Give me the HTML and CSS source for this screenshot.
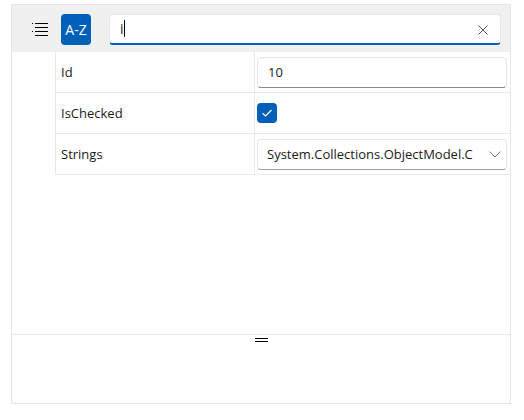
FILE: index.html
```html
<!DOCTYPE html>
<html>
<head>
<meta charset="utf-8">
<link rel="stylesheet" href="styles.css">
</head>
<body>
<div class="window">
  <div class="header">
    <div class="list-btn">
      <svg width="17" height="13" viewBox="0 0 17 13">
        <g fill="#000">
          <rect x="0" y="0" width="1" height="1"/>
          <rect x="3" y="0" width="13" height="1"/>
          <rect x="3" y="4" width="13" height="1"/>
          <rect x="0" y="8" width="1" height="1"/>
          <rect x="3" y="8" width="13" height="1"/>
          <rect x="3" y="12" width="13" height="1"/>
        </g>
      </svg>
    </div>
    <div class="az-btn">A-Z</div>
    <div class="search">
      <span class="search-text">i</span><span class="caret"></span>
      <svg class="clear" width="10" height="10" viewBox="0 0 10 10">
        <path d="M0.5 0.5L9.5 9.5M9.5 0.5L0.5 9.5" stroke="#555" stroke-width="1"/>
      </svg>
    </div>
  </div>
  <div class="grid-area">
    <div class="grid">
      <div class="row">
        <div class="name">Id</div>
        <div class="value"><div class="textbox">10</div></div>
      </div>
      <div class="row">
        <div class="name">IsChecked</div>
        <div class="value">
          <div class="checkbox">
            <svg width="12" height="10" viewBox="0 0 12 10">
              <path d="M1.5 5.2L4.5 8L10.5 2" fill="none" stroke="#fff" stroke-width="1.2"/>
            </svg>
          </div>
        </div>
      </div>
      <div class="row">
        <div class="name">Strings</div>
        <div class="value">
          <div class="combo">
            <span class="combo-text">System.Collections.ObjectModel.Collection`1[System.String]</span>
            <svg class="chev" width="12" height="7" viewBox="0 0 12 7">
              <path d="M0.5 0.5L6 6L11.5 0.5" fill="none" stroke="#777" stroke-width="1"/>
            </svg>
          </div>
        </div>
      </div>
    </div>
  </div>
  <div class="splitter"><div class="grip"></div></div>
  <div class="details"></div>
</div>
</body>
</html>
```
FILE: styles.css
```css
html, body {
  margin: 0;
  padding: 0;
  background: #ffffff;
}
body {
  font-family: "Open Sans", "Noto Sans", sans-serif;
  font-size: 13px;
  color: #1a1a1a;
}
.window {
  margin: 4px 0 0 11px;
  width: 498px;
  height: 398px;
  border: 1px solid #e5e5e5;
  display: flex;
  flex-direction: column;
}
.header {
  height: 47px;
  background: #f0f0f0;
  display: flex;
  align-items: center;
  padding-left: 13px;
  box-sizing: border-box;
  padding-top: 1px;
}
.list-btn {
  width: 30px;
  height: 31px;
  display: flex;
  align-items: center;
  justify-content: center;
  margin-right: 6px;
}
.az-btn {
  width: 30px;
  height: 31px;
  background: #005fb8;
  color: #fff;
  border-radius: 4px;
  display: flex;
  align-items: center;
  justify-content: center;
  font-size: 14px;
  margin-right: 18px;
}
.search {
  width: 392px;
  height: 31px;
  box-sizing: border-box;
  background: #fff;
  border-radius: 4px;
  border: 1px solid #e8e8e8;
  border-bottom: 2px solid #005fb8;
  display: flex;
  align-items: center;
  padding-left: 10px;
  position: relative;
}
.search-text {
  font-size: 14px;
}
.caret {
  width: 1px;
  height: 17px;
  background: #000;
}
.clear {
  position: absolute;
  right: 12px;
  top: 10px;
}
.grid-area {
  flex: 1;
  padding-left: 43px;
}
.grid {
  display: flex;
  flex-direction: column;
}
.row {
  display: flex;
  height: 41px;
  border-bottom: 1px solid #e8e8e8;
  box-sizing: border-box;
}
.name {
  width: 200px;
  border-left: 1px solid #e8e8e8;
  border-right: 1px solid #e8e8e8;
  padding-left: 5px;
  display: flex;
  align-items: center;
  box-sizing: border-box;
}
.value {
  flex: 1;
  display: flex;
  align-items: center;
  padding-left: 2px;
  padding-right: 2px;
  min-width: 0;
}
.textbox {
  width: 250px;
  height: 31px;
  box-sizing: border-box;
  border: 1px solid #e5e5e5;
  border-bottom-color: #8a8a8a;
  border-radius: 4px;
  display: flex;
  align-items: center;
  padding-left: 10px;
}
.checkbox {
  width: 20px;
  height: 20px;
  background: #005fb8;
  border-radius: 4px;
  display: flex;
  align-items: center;
  justify-content: center;
}
.combo {
  width: 250px;
  height: 31px;
  box-sizing: border-box;
  border: 1px solid #e5e5e5;
  border-bottom-color: #a0a0a0;
  border-radius: 4px;
  display: flex;
  align-items: center;
  padding-left: 9px;
}
.combo-text {
  width: 206px;
  overflow: hidden;
  white-space: nowrap;
}
.chev {
  margin-left: 16px;
}
.splitter {
  height: 1px;
  background: #e8e8e8;
  position: relative;
}
.grip {
  position: absolute;
  left: 243px;
  top: 4px;
  width: 13px;
  height: 4px;
  border-top: 1px solid #000;
  border-bottom: 1px solid #000;
  box-sizing: border-box;
}
.details {
  height: 68px;
}
```
